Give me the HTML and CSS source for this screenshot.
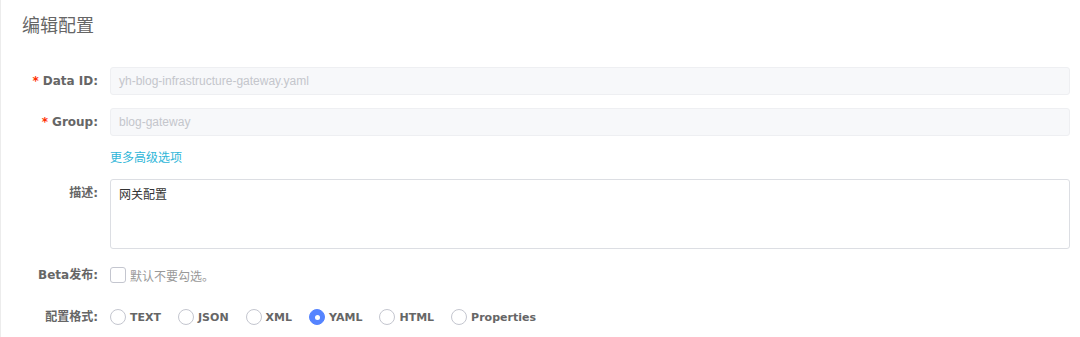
FILE: index.html
```html
<!DOCTYPE html>
<html lang="zh-CN">
<head>
    <meta charset="UTF-8">
    <title>编辑配置</title>
    <link rel="stylesheet" href="styles.css">
</head>
<body>
    <div class="page">
        <h1 class="page-title">编辑配置</h1>
        <div class="form">
            <div class="form-row row-dataid">
                <div class="form-label"><span class="required">*</span>Data ID:</div>
                <div class="form-control">
                    <div class="input disabled">yh-blog-infrastructure-gateway.yaml</div>
                </div>
            </div>
            <div class="form-row row-group">
                <div class="form-label"><span class="required">*</span>Group:</div>
                <div class="form-control">
                    <div class="input disabled">blog-gateway</div>
                </div>
            </div>
            <div class="form-row row-more">
                <div class="form-label"></div>
                <div class="form-control">
                    <a class="more-link" href="#">更多高级选项</a>
                </div>
            </div>
            <div class="form-row row-desc">
                <div class="form-label">描述:</div>
                <div class="form-control">
                    <div class="textarea">网关配置</div>
                </div>
            </div>
            <div class="form-row row-beta">
                <div class="form-label">Beta发布:</div>
                <div class="form-control inline">
                    <span class="checkbox"></span>
                    <span class="hint">默认不要勾选。</span>
                </div>
            </div>
            <div class="form-row row-format">
                <div class="form-label">配置格式:</div>
                <div class="form-control inline radios">
                    <label class="radio"><span class="radio-dot"></span>TEXT</label>
                    <label class="radio"><span class="radio-dot"></span>JSON</label>
                    <label class="radio"><span class="radio-dot"></span>XML</label>
                    <label class="radio checked"><span class="radio-dot"></span>YAML</label>
                    <label class="radio"><span class="radio-dot"></span>HTML</label>
                    <label class="radio"><span class="radio-dot"></span>Properties</label>
                </div>
            </div>
        </div>
    </div>
</body>
</html>
```

FILE: styles.css
```css
html, body {
    margin: 0;
    padding: 0;
    background: #fff;
}
body {
    width: 100vw;
    height: 100vh;
    overflow: hidden;
    font-family: "Liberation Sans", "Noto Sans CJK SC", sans-serif;
    font-size: 12px;
    color: #333;
}
.page {
    height: 100vh;
    box-sizing: border-box;
    border-left: 1px solid #ececec;
    padding: 0 10px 0 0;
}
.page-title {
    margin: 0;
    padding: 13px 0 0 21px;
    font-size: 18px;
    font-weight: normal;
    line-height: 26px;
    color: #666;
}
.form {
    margin-top: 28px;
}
.form-row {
    display: flex;
    align-items: flex-start;
}
.form-label {
    width: 97px;
    flex: none;
    padding-right: 12px;
    text-align: right;
    font-family: "DejaVu Sans", "Noto Sans CJK SC", sans-serif;
    font-weight: bold;
    font-size: 12px;
    line-height: 28px;
    color: #666;
}
.required {
    color: #ff3000;
    margin-right: 4px;
    font-size: 12px;
}
.form-control {
    flex: 1;
    min-width: 0;
}
.input {
    height: 28px;
    box-sizing: border-box;
    border: 1px solid #eeeff2;
    border-radius: 3px;
    padding: 0 8px;
    line-height: 26px;
    background: #f7f8fa;
}
.input.disabled {
    color: #c4c6cc;
}
.row-dataid {
    margin-bottom: 13px;
}
.row-more {
    margin-top: 11px;
}
.row-more .form-label {
    line-height: 20px;
}
.more-link {
    display: block;
    line-height: 20px;
    color: #2fb6d8;
    text-decoration: none;
    font-family: "Noto Sans CJK SC", sans-serif;
}
.row-desc {
    margin-top: 12px;
}
.row-desc .form-label {
    line-height: 28px;
}
.textarea {
    height: 70px;
    box-sizing: border-box;
    border: 1px solid #dcdee3;
    border-radius: 3px;
    padding: 5px 8px;
    line-height: 18px;
    color: #333;
    font-family: "Noto Sans CJK SC", sans-serif;
}
.row-beta {
    margin-top: 12px;
}
.inline {
    display: flex;
    align-items: center;
    height: 28px;
}
.checkbox {
    width: 16px;
    height: 16px;
    box-sizing: border-box;
    border: 1px solid #c4c6cf;
    border-radius: 3px;
    background: #fff;
    margin-right: 4px;
}
.hint {
    color: #999;
    font-family: "Noto Sans CJK SC", sans-serif;
}
.row-format {
    margin-top: 14px;
}
.radios {
    gap: 17px;
}
.radio {
    display: flex;
    align-items: center;
    font-family: "DejaVu Sans", sans-serif;
    font-weight: bold;
    font-size: 11px;
    color: #666;
}
.radio-dot {
    width: 16px;
    height: 16px;
    box-sizing: border-box;
    border: 1px solid #c4c6cf;
    border-radius: 50%;
    background: #fff;
    margin-right: 4px;
    display: flex;
    align-items: center;
    justify-content: center;
}
.radio.checked .radio-dot {
    background: #5584ff;
    border-color: #5584ff;
}
.radio.checked .radio-dot::after {
    content: "";
    width: 5px;
    height: 5px;
    border-radius: 50%;
    background: #fff;
}
```
